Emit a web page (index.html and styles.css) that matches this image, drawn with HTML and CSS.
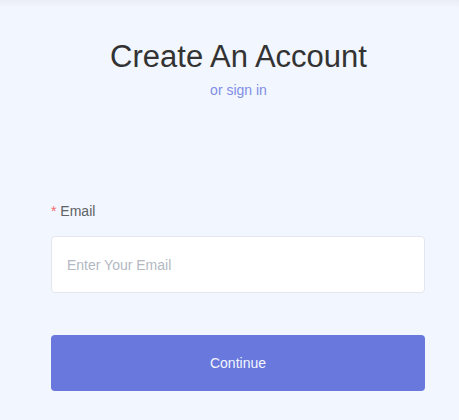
FILE: index.html
```html
<!DOCTYPE html>
<html>
<head>
<meta charset="utf-8">
<link rel="stylesheet" href="styles.css">
</head>
<body>
<div class="page">
  <header class="head">
    <h1 class="title">Create An Account</h1>
    <a class="signin" href="#">or sign in</a>
  </header>
  <form class="form">
    <label class="label"><span class="req">*</span> Email</label>
    <input class="input" type="text" placeholder="Enter Your Email">
    <button class="btn" type="button">Continue</button>
  </form>
</div>
</body>
</html>
```
FILE: styles.css
```css
html, body {
  margin: 0;
  padding: 0;
}
body {
  background: #f2f6fe;
  font-family: "Liberation Sans", Arial, sans-serif;
  width: 459px;
  height: 420px;
  overflow: hidden;
}
.page {
  height: 420px;
  background: linear-gradient(#eaedf5 0px, #f2f6fe 8px);
  box-sizing: border-box;
  padding-top: 38px;
}
.head {
  display: flex;
  flex-direction: column;
  align-items: center;
  padding-left: 18px;
}
.title {
  margin: 0;
  font-weight: normal;
  font-size: 31px;
  line-height: 38px;
  color: #333333;
}
.signin {
  margin-top: 5px;
  font-size: 14px;
  line-height: 18px;
  color: #7f8ee6;
  text-decoration: none;
}
.form {
  display: flex;
  flex-direction: column;
  margin: 103px 34px 0 51px;
}
.label {
  font-size: 14px;
  line-height: 18px;
  color: #606266;
}
.req {
  color: #f56c6c;
}
.input {
  margin-top: 16px;
  height: 57px;
  box-sizing: border-box;
  border: 1px solid #e4e7ed;
  border-radius: 4px;
  background: #ffffff;
  padding: 0 15px;
  font-family: inherit;
  font-size: 14px;
  color: #606266;
  outline: none;
}
.input::placeholder {
  color: #b3b8c2;
}
.btn {
  margin-top: 42px;
  height: 56px;
  border: none;
  border-radius: 4px;
  background: #6878dc;
  color: #f4f6ff;
  font-family: inherit;
  font-size: 14px;
}
```
